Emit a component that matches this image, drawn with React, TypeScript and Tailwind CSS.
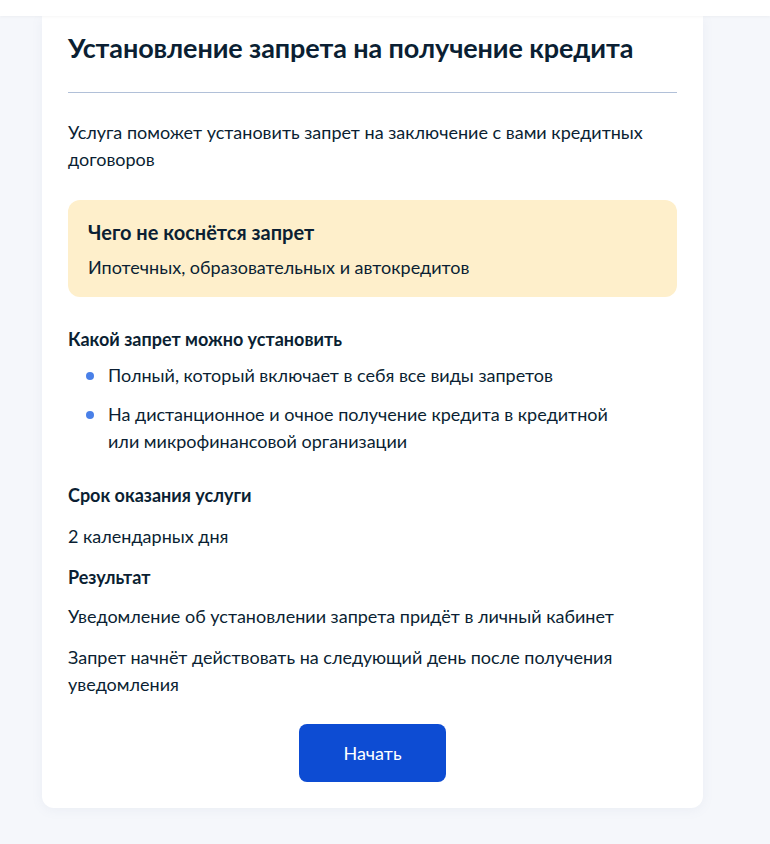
import React from "react";

export default function App() {
  const font = { fontFamily: "Lato, 'Noto Sans', sans-serif" };
  return (
    <div className="min-h-[844px] bg-[#f5f7fb] text-[#0b1f33]" style={font}>
      <div className="relative z-10 h-4 bg-white shadow-[0_1px_3px_rgba(0,0,0,0.04)]" />
      <div className="ml-[42px] w-[661px] rounded-b-xl bg-white px-[26px] pb-[26px] pt-4 shadow-[0_2px_12px_rgba(110,130,160,0.08)]">
        <h1 className="text-[27px] font-bold leading-8 tracking-[-0.1px]">
          Установление запрета на получение кредита
        </h1>
        <div className="mt-[28px] h-px bg-[#b1c0d8]" />
        <p className="mt-[26px] text-[18px] leading-[27px]">
          Услуга поможет установить запрет на заключение с вами кредитных договоров
        </p>
        <div className="mt-[27px] rounded-xl bg-[#feefcb] px-5 pb-4 pt-[18px]">
          <div className="text-[20px] font-bold leading-[28px]">Чего не коснётся запрет</div>
          <div className="mt-[8px] text-[18px] leading-[27px]">
            Ипотечных, образовательных и автокредитов
          </div>
        </div>
        <div className="mt-[29px] text-[18px] font-bold leading-[27px]">
          Какой запрет можно установить
        </div>
        <ul className="mt-[9px] flex flex-col gap-3 text-[18px] leading-[27px]">
          <li className="flex">
            <span className="ml-[18px] mr-[14px] mt-[10px] h-[8px] w-[8px] shrink-0 rounded-full bg-[#4a80e8]" />
            <span>Полный, который включает в себя все виды запретов</span>
          </li>
          <li className="flex">
            <span className="ml-[18px] mr-[14px] mt-[10px] h-[8px] w-[8px] shrink-0 rounded-full bg-[#4a80e8]" />
            <span className="w-[510px]">
              На дистанционное и очное получение кредита в кредитной или микрофинансовой организации
            </span>
          </li>
        </ul>
        <div className="mt-[27px] text-[18px] font-bold leading-[27px]">Срок оказания услуги</div>
        <div className="mt-[14px] text-[18px] leading-[27px]">2 календарных дня</div>
        <div className="mt-[14px] text-[18px] font-bold leading-[27px]">Результат</div>
        <div className="mt-[12px] text-[18px] leading-[27px]">
          Уведомление об установлении запрета придёт в личный кабинет
        </div>
        <div className="mt-[14px] w-[560px] text-[18px] leading-[27px]">
          Запрет начнёт действовать на следующий день после получения уведомления
        </div>
        <div className="mt-[26px] flex justify-center">
          <button className="h-[58px] w-[147px] rounded-lg bg-[#0d4cd3] text-[18px] text-white">
            Начать
          </button>
        </div>
      </div>
    </div>
  );
}
